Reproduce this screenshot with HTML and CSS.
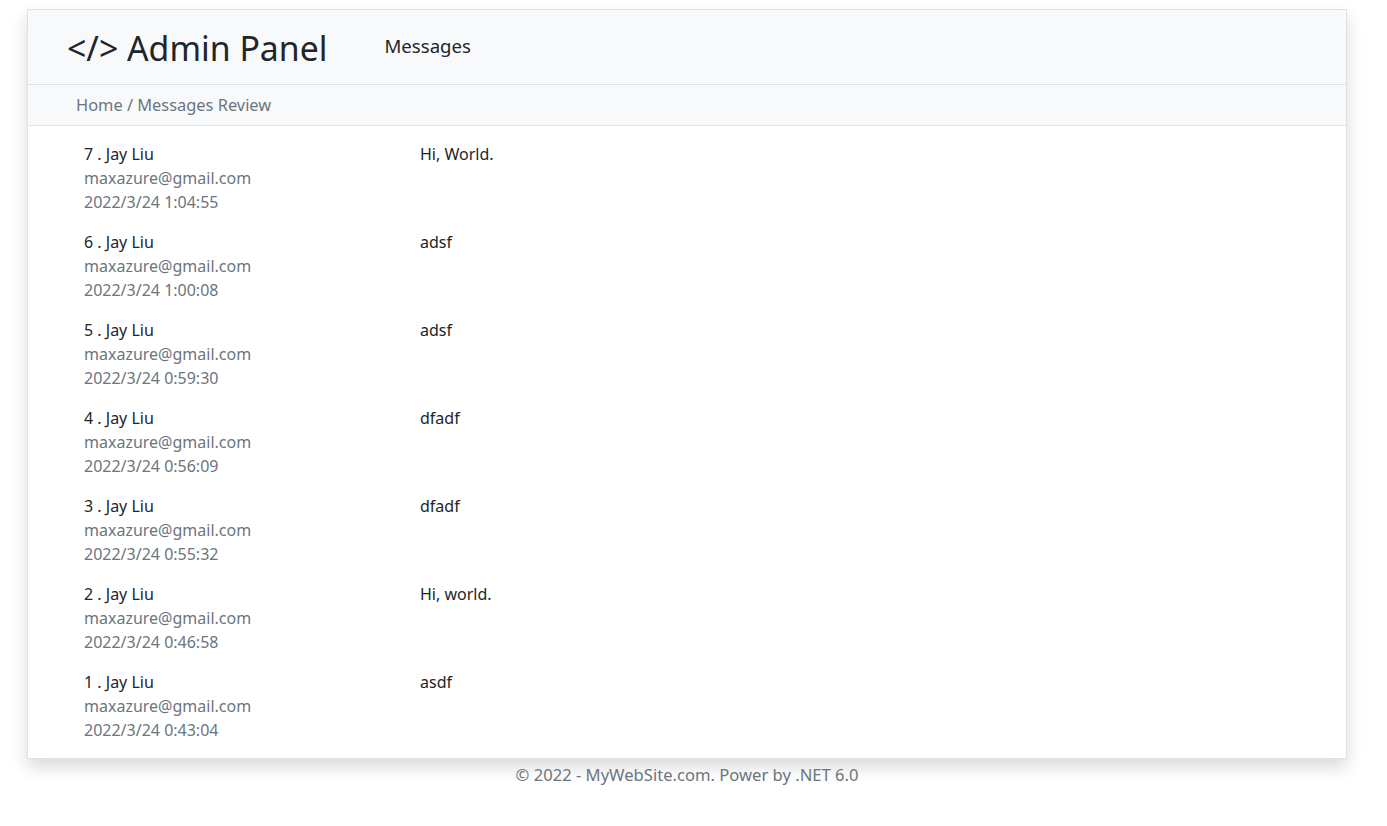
FILE: index.html
```html
<!DOCTYPE html>
<html lang="en">
<head>
<meta charset="utf-8">
<title>Admin Panel - Messages Review</title>
<link rel="stylesheet" href="styles.css">
</head>
<body>
<div class="page">
  <div class="panel">
    <header class="navbar">
      <a class="brand" href="#">&lt;/&gt; Admin Panel</a>
      <nav class="nav"><a class="nav-link" href="#">Messages</a></nav>
    </header>
    <div class="crumbs">Home / Messages Review</div>
    <main class="list">
      <div class="msg"><div class="who"><div class="name">7 . Jay Liu</div><div class="meta">maxazure@gmail.com</div><div class="meta">2022/3/24 1:04:55</div></div><div class="body">Hi, World.</div></div>
      <div class="msg"><div class="who"><div class="name">6 . Jay Liu</div><div class="meta">maxazure@gmail.com</div><div class="meta">2022/3/24 1:00:08</div></div><div class="body">adsf</div></div>
      <div class="msg"><div class="who"><div class="name">5 . Jay Liu</div><div class="meta">maxazure@gmail.com</div><div class="meta">2022/3/24 0:59:30</div></div><div class="body">adsf</div></div>
      <div class="msg"><div class="who"><div class="name">4 . Jay Liu</div><div class="meta">maxazure@gmail.com</div><div class="meta">2022/3/24 0:56:09</div></div><div class="body">dfadf</div></div>
      <div class="msg"><div class="who"><div class="name">3 . Jay Liu</div><div class="meta">maxazure@gmail.com</div><div class="meta">2022/3/24 0:55:32</div></div><div class="body">dfadf</div></div>
      <div class="msg"><div class="who"><div class="name">2 . Jay Liu</div><div class="meta">maxazure@gmail.com</div><div class="meta">2022/3/24 0:46:58</div></div><div class="body">Hi, world.</div></div>
      <div class="msg"><div class="who"><div class="name">1 . Jay Liu</div><div class="meta">maxazure@gmail.com</div><div class="meta">2022/3/24 0:43:04</div></div><div class="body">asdf</div></div>
    </main>
  </div>
  <footer class="footer">© 2022 - MyWebSite.com. Power by .NET 6.0</footer>
</div>
</body>
</html>
```
FILE: styles.css
```css
* { box-sizing: border-box; }
html, body { margin: 0; padding: 0; background: #fff; }
body {
  font-family: "Noto Sans", "Open Sans", sans-serif;
  font-size: 16px;
  line-height: 24px;
  color: #212529;
}
.page {
  width: 1320px;
  margin: 9px 0 0 27px;
}
.panel {
  border: 1px solid #dee2e6;
  box-shadow: 0 8px 16px rgba(0,0,0,.15);
  background: #fff;
}
.navbar {
  height: 75px;
  background: #f8f9fa;
  border-bottom: 1px solid #dee2e6;
  display: flex;
  align-items: center;
  padding-left: 39px;
}
.brand {
  font-size: 33.8px;
  line-height: 40px;
  color: #212529;
  text-decoration: none;
  margin-right: 57px;
  position: relative;
  top: 1px;
}
.nav-link {
  font-size: 18.6px;
  color: #212529;
  text-decoration: none;
  position: relative;
  top: -1px;
}
.crumbs {
  height: 41px;
  background: #f8f9fa;
  border-bottom: 1px solid #dee2e6;
  padding-left: 48px;
  display: flex;
  align-items: center;
  color: #6c757d;
  font-size: 16.4px;
}
.list {
  padding: 16px 0 0 56px;
}
.msg {
  display: flex;
  padding-bottom: 16px;
}
.who { width: 336px; }
.name { color: #212529; }
.meta { color: #6c757d; }
.body { color: #212529; }
.footer {
  text-align: center;
  color: #6c757d;
  font-size: 16.6px;
  padding-top: 4px;
}
```
